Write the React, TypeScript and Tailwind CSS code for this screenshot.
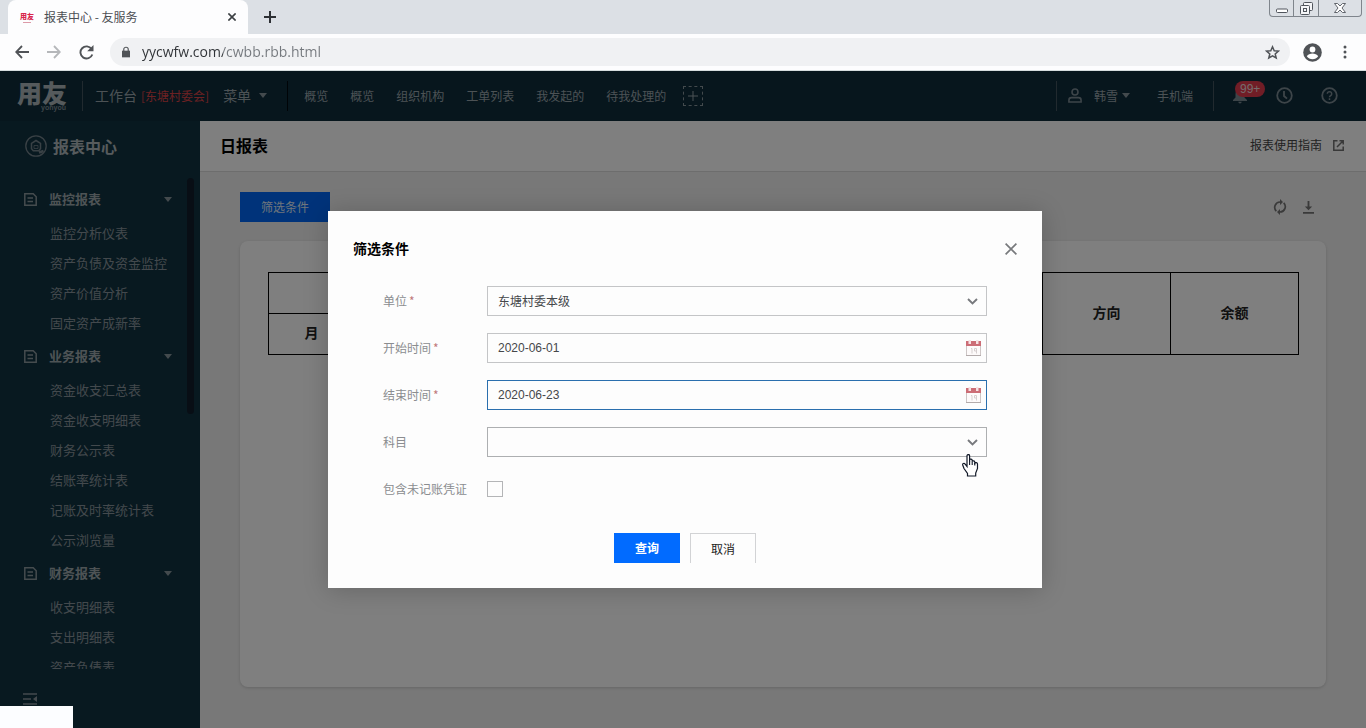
import { useState } from "react";
import type { ReactNode } from "react";

const menuGroups = [
  {
    title: "监控报表",
    items: ["监控分析仪表", "资产负债及资金监控", "资产价值分析", "固定资产成新率"],
  },
  {
    title: "业务报表",
    items: ["资金收支汇总表", "资金收支明细表", "财务公示表", "结账率统计表", "记账及时率统计表", "公示浏览量"],
  },
  {
    title: "财务报表",
    items: ["收支明细表", "支出明细表", "资产负债表"],
  },
];

const shortcuts = ["概览", "概览", "组织机构", "工单列表", "我发起的", "待我处理的"];

function Caret() {
  return (
    <svg width="8" height="5" viewBox="0 0 8 5" className="shrink-0 text-[#87949b]" fill="currentColor" aria-hidden="true">
      <path d="M0 0h8L4 5z" />
    </svg>
  );
}

function DocIcon() {
  return (
    <svg width="13" height="13" viewBox="0 0 13 13" fill="none" stroke="#8b989d" strokeWidth="1.500" aria-hidden="true">
      <path d="M.8.8h8.400l3 3v8.400H.8z" />
      <path d="M3.500 5h5.500M3.500 8.500h5.500" />
    </svg>
  );
}

function CalendarIcon() {
  return (
    <svg width="15" height="16" viewBox="0 0 15 16" aria-hidden="true">
      <path d="M.5 5.500h14v10H.5z" fill="#fdfafa" stroke="#cdc6c6" />
      <path d="M0 1h15v5H0z" fill="#cc6d76" />
      <path d="M2.500 0h2.500v4H2.500zM10 0h2.500v4H10z" fill="#f6e2e3" />
      <path d="M5 8.500h1v5M8.500 8.500h2v5M8.500 8.500v2.500h2" fill="none" stroke="#d6cfcf" />
      <path d="M0 15.500h15" stroke="#b3abab" />
    </svg>
  );
}

function BrowserBar() {
  return (
    <div className="shrink-0 bg-[#dce0e5] font-['Open_Sans','Noto_Sans_CJK_SC',sans-serif]">
      <div className="flex h-[34px] items-start justify-between">
        <div className="flex h-full items-center pl-2">
          <div className="flex h-full w-[240px] items-center rounded-t-lg bg-[#fdfdfe] pr-2 pl-3 text-[12px] text-[#4c4f54]">
            <span className="flex w-[14px] flex-col items-center text-[7px] leading-[9px] font-black text-[#d8274c]" aria-hidden="true">
              <span className="whitespace-nowrap">用友</span>
              <span className="mt-px h-px w-2 bg-[#dc9aa8]" />
            </span>
            <span className="ml-[10px] flex-1 font-['Noto_Sans_CJK_SC',sans-serif]">报表中心 - 友服务</span>
            <button type="button" aria-label="关闭标签页" className="flex size-4 items-center justify-center text-[#3c4043]">
              <svg width="8" height="8" viewBox="0 0 8 8" stroke="currentColor" strokeWidth="1.600" aria-hidden="true">
                <path d="M.4.4l7.200 7.200M7.600.4L.4 7.600" />
              </svg>
            </button>
          </div>
          <button type="button" aria-label="新标签页" className="ml-4 text-[#2d3034]">
            <svg width="12" height="12" viewBox="0 0 12 12" stroke="currentColor" strokeWidth="2" aria-hidden="true">
              <path d="M6 0v12M0 6h12" />
            </svg>
          </button>
        </div>
        <div className="mr-1 flex h-[17px] rounded-b border border-t-0 border-[#7f858c] text-[#50555c]">
          <button type="button" aria-label="最小化" className="flex w-6 items-center justify-center border-r border-[#7f858c]">
            <svg width="12" height="12" viewBox="0 0 12 12" fill="#fff" stroke="currentColor" aria-hidden="true">
              <rect x=".5" y="7" width="11" height="3.500" rx="1" />
            </svg>
          </button>
          <button type="button" aria-label="还原" className="flex w-[25px] items-center justify-center border-r border-[#7f858c]">
            <svg width="13" height="13" viewBox="0 0 13 13" fill="#f4f5f7" stroke="currentColor" aria-hidden="true">
              <rect x="3.500" y=".5" width="9" height="8" rx="1" />
              <rect x=".5" y="3.500" width="9" height="9" rx="1" />
              <rect x="3.500" y="6.500" width="3" height="3" />
            </svg>
          </button>
          <button type="button" aria-label="关闭" className="flex w-[42px] items-center justify-center">
            <svg width="12" height="10" viewBox="0 0 12 10" fill="#fff" stroke="currentColor" strokeWidth=".9" aria-hidden="true">
              <path d="M.5.5h3L6 3 8.500.5h3L8 5l3.500 4.500h-3L6 7 3.500 9.500h-3L4 5z" />
            </svg>
          </button>
        </div>
      </div>
      <div className="flex h-[37px] items-center border-b border-[#d5dcdd] bg-[#fdfdfe] pr-[19px] pl-[15px] text-[#505357]">
        <button type="button" aria-label="后退">
          <svg width="14" height="14" viewBox="0 0 14 14" fill="none" stroke="currentColor" strokeWidth="1.800" aria-hidden="true">
            <path d="M14 7H1.500M7 1L1.200 7 7 13" />
          </svg>
        </button>
        <button type="button" aria-label="前进" className="ml-[18px] text-[#b5b7ba]">
          <svg width="14" height="14" viewBox="0 0 14 14" fill="none" stroke="currentColor" strokeWidth="1.800" aria-hidden="true">
            <path d="M0 7h12.500M7 1l5.800 6L7 13" />
          </svg>
        </button>
        <button type="button" aria-label="重新加载" className="ml-[18px]">
          <svg width="15" height="15" viewBox="0 0 15 15" fill="none" stroke="currentColor" strokeWidth="1.900" aria-hidden="true">
            <path d="M12.600 4A6.100 6.100 0 1 0 13.300 9.500" />
            <path d="M14.500 0v6.300H8.200z" fill="currentColor" stroke="none" />
          </svg>
        </button>
        <div className="ml-4 flex h-7 flex-1 items-center rounded-full bg-[#f0f1f3] pr-[10px] pl-3">
          <svg width="8" height="12" viewBox="0 0 9 12" fill="none" stroke="currentColor" className="shrink-0" aria-hidden="true">
            <path d="M0 4.500h9V12H0z" fill="currentColor" stroke="none" />
            <path d="M2 5V3a2.500 2.300 0 0 1 5 0v2" strokeWidth="1.300" />
          </svg>
          <input
            aria-label="地址"
            defaultValue="yycwfw.com/cwbb.rbb.html"
            className="ml-3 flex-1 bg-transparent bg-[linear-gradient(90deg,#2f3236_81px,#74787d_81px)] bg-clip-text pb-[2px] text-[14px] text-transparent outline-none"
          />
          <button type="button" aria-label="添加书签">
            <svg width="15" height="15" viewBox="0 0 15 15" fill="none" stroke="currentColor" strokeWidth="1.500" aria-hidden="true">
              <path d="M7.500 1.800l1.700 3.900 4.200.4-3.200 2.800 1 4.100-3.700-2.200L3.800 13l1-4.100L1.600 6.100l4.200-.4z" />
            </svg>
          </button>
        </div>
        <button type="button" aria-label="账户" className="ml-[13px]">
          <svg width="19" height="19" viewBox="0 0 19 19" aria-hidden="true">
            <circle cx="9.500" cy="9.500" r="9.300" fill="currentColor" />
            <circle cx="9.500" cy="6.500" r="2.900" fill="#fff" />
            <path d="M3.800 13.300c1.200-1.900 3.400-2.700 5.700-2.700s4.500.8 5.700 2.700a6.900 6.900 0 0 1-11.400 0z" fill="#fff" />
          </svg>
        </button>
        <button type="button" aria-label="更多" className="ml-[21px]">
          <svg width="4" height="14" viewBox="0 0 4 14" fill="currentColor" aria-hidden="true">
            <circle cx="2" cy="2" r="1.500" />
            <circle cx="2" cy="7" r="1.500" />
            <circle cx="2" cy="12" r="1.500" />
          </svg>
        </button>
      </div>
    </div>
  );
}

function TopBar() {
  return (
    <header className="flex h-[50px] shrink-0 items-center justify-between bg-[#0f2c3b] pb-px text-[12px] text-[#98a4aa]">
      <div className="flex items-center">
        <a href="#home" aria-label="用友" className="ml-[17px] flex w-[50px] flex-col items-end text-[#aab4b9]">
          <span className="text-[25px] leading-[25px] font-black">用友</span>
          <span className="pr-px font-['Liberation_Sans',sans-serif] text-[7px] leading-[6px] font-bold text-[#7c8b93]">yonyou</span>
        </a>
        <span className="ml-[15px] h-[30px] w-px bg-[#43545e]" />
        <a href="#workbench" className="ml-3 text-[14px]">工作台</a>
        <span className="ml-1 text-[#d94346]">[东塘村委会]</span>
        <button type="button" className="ml-[14px] flex items-center gap-2 text-[14px]">
          菜单
          <Caret />
        </button>
        <span className="ml-5 h-[30px] w-px bg-[#00080e]" />
        <nav className="ml-4 flex gap-[22px]">
          {shortcuts.map((name, i) => (
            <a key={i} href="#shortcut" className="whitespace-nowrap">{name}</a>
          ))}
        </nav>
        <button type="button" aria-label="添加快捷入口" className="ml-[17px] flex size-5 items-center justify-center border border-dashed border-[#87949b]">
          <svg width="10" height="10" viewBox="0 0 10 10" stroke="currentColor" aria-hidden="true">
            <path d="M5 0v10M0 5h10" />
          </svg>
        </button>
      </div>
      <div className="flex items-center pr-7">
        <span className="h-[30px] w-px bg-[#43545e]" />
        <button type="button" className="ml-[11px] flex items-center">
          <svg width="14" height="15" viewBox="0 0 15 16" fill="none" stroke="#7b8a92" strokeWidth="1.700" aria-hidden="true">
            <circle cx="7.500" cy="4.200" r="3.200" />
            <path d="M1 15v-2c0-1.700 1.200-2.700 2.700-2.700h7.600c1.500 0 2.700 1 2.700 2.700v2z" />
          </svg>
          <span className="mr-1 ml-3">韩雪</span>
          <Caret />
        </button>
        <a href="#mobile" className="ml-[27px]">手机端</a>
        <span className="ml-5 h-[30px] w-px bg-[#43545e]" />
        <button type="button" aria-label="通知" className="relative ml-[18px] text-[#7b8a92]">
          <svg width="16" height="16" viewBox="0 0 16 16" fill="currentColor" aria-hidden="true">
            <path d="M8 1C5 1 3.500 3 3.500 6v3.500L1 12v1h14v-1l-2.500-2.500V6C12.500 3 11 1 8 1zM6.300 13.800h3.400a1.700 1.700 0 0 1-3.400 0z" />
          </svg>
          <span className="absolute -top-[7px] left-[3px] rounded-full bg-[#e23a4c] px-[5px] font-['Liberation_Sans',sans-serif] text-[12px] leading-4 text-[#ecd6d8]">99+</span>
        </button>
        <button type="button" aria-label="历史" className="ml-7 text-[#7b8a92]">
          <svg width="17" height="17" viewBox="0 0 17 17" fill="none" stroke="currentColor" strokeWidth="1.800" aria-hidden="true">
            <circle cx="8.500" cy="8.500" r="7.300" />
            <path d="M8 4v5l3 2.700" />
          </svg>
        </button>
        <button type="button" aria-label="帮助" className="ml-7 text-[#7b8a92]">
          <svg width="17" height="17" viewBox="0 0 17 17" fill="none" stroke="currentColor" strokeWidth="1.800" aria-hidden="true">
            <circle cx="8.500" cy="8.500" r="7.300" />
            <path d="M6.300 6.800a2.200 2.200 0 1 1 3.400 1.900c-.8.500-1.200.8-1.200 1.500M8.500 11.300v1.600" strokeWidth="1.500" />
          </svg>
        </button>
      </div>
    </header>
  );
}

function SideBar() {
  return (
    <aside className="relative flex w-[200px] shrink-0 flex-col bg-[#113240] text-[13px] text-[#87939a]">
      <div className="flex h-[50px] shrink-0 items-center gap-[6px] pb-px pl-[25px] text-[16px] font-bold text-[#adb6ba]">
        <svg width="22" height="22" viewBox="0 0 22 22" fill="none" stroke="#73828a" aria-hidden="true">
          <circle cx="11" cy="11" r="10.200" strokeWidth="1.300" />
          <path d="M11 5.500l4.500 2.800v5.500l-1.800 2H8.300l-1.800-2V8.300z" strokeWidth="1.500" />
          <path d="M9 10.500h4v3H9z" strokeWidth=".8" />
          <path d="M14 17.500l4.500-1.500" strokeWidth="2.500" />
        </svg>
        报表中心
      </div>
      <nav className="mt-[10px] min-h-0 flex-1 overflow-hidden">
        {menuGroups.map((group) => (
          <section key={group.title}>
            <button type="button" className="flex h-[37px] w-full items-center pr-7 pb-px pl-6 font-bold text-[#9ca7ab]">
              <DocIcon />
              <span className="ml-3 flex-1 text-left">{group.title}</span>
              <Caret />
            </button>
            <ul>
              {group.items.map((item) => (
                <li key={item}>
                  <a href="#report" className="block h-[30px] pl-[50px] leading-[30px] whitespace-nowrap">{item}</a>
                </li>
              ))}
            </ul>
          </section>
        ))}
      </nav>
      <div className="h-[59px] shrink-0 pt-6 pl-[23px]">
        <button type="button" aria-label="收起菜单" className="block">
          <svg width="14" height="12" viewBox="0 0 14 12" aria-hidden="true">
            <path d="M0 1h14M0 6h8M0 11h14" stroke="#87939a" strokeWidth="1.500" />
            <path d="M14 3v6l-4-3z" fill="#87939a" />
          </svg>
        </button>
      </div>
      <span className="absolute top-[57px] right-[6px] h-[236px] w-[7px] rounded-full bg-[#101c2a]" />
    </aside>
  );
}

function ReportTable() {
  return (
    <table className="w-full table-fixed border-collapse text-[14px] text-[#222]">
      <colgroup>
        <col className="w-[86px]" />
        <col className="w-[86px]" />
        <col className="w-[128px]" />
        <col />
        <col className="w-[128px]" />
        <col className="w-[128px]" />
        <col className="w-[128px]" />
        <col className="w-[128px]" />
      </colgroup>
      <thead>
        <tr className="h-[41px]">
          <th colSpan={2} className="border border-black" />
          <th rowSpan={2} className="border border-black" />
          <th rowSpan={2} className="border border-black" />
          <th rowSpan={2} className="border border-black" />
          <th rowSpan={2} className="border border-black" />
          <th rowSpan={2} className="border border-black pb-[3px]">方向</th>
          <th rowSpan={2} className="border border-black pb-[3px]">余额</th>
        </tr>
        <tr className="h-[41px]">
          <th className="border border-black pb-[3px]">月</th>
          <th className="border border-black" />
        </tr>
      </thead>
    </table>
  );
}

function Field({ id, label, required, children }: { id: string; label: string; required?: boolean; children: ReactNode }) {
  return (
    <>
      <label htmlFor={id} className="self-center whitespace-nowrap text-[#8b8d90]">
        {label}
        {required && <span className="ml-[2px] text-[#c0787b]">*</span>}
      </label>
      <div className="relative flex h-[30px] items-center">{children}</div>
    </>
  );
}

function HandCursor() {
  return (
    <svg width="17" height="23" viewBox="0 0 17 23" className="pointer-events-none absolute top-[27px] right-2" aria-hidden="true">
      <path
        d="M5 1.800c0-1.700 2.600-1.700 2.600 0v5.700V5.800c.4-1 2.500-.8 2.600.5v1.200c.4-1 2.500-.7 2.600.6v1c.6-.9 2.700-.6 2.700 1v4.400l-1.800 4.500V22H5.500v-2.500L2 14.500.7 11c-.4-1.500 1.500-2.200 2.500-.8L5 12.500z"
        fill="#fff"
        stroke="#111827"
        strokeWidth="1.200"
      />
      <path d="M7.600 7v4M10.200 7.500V11M12.800 9v2.500" stroke="#111827" strokeWidth="1.100" />
    </svg>
  );
}

function SelectChevron() {
  return (
    <svg width="11" height="7" viewBox="0 0 11 7" fill="none" stroke="#77797d" strokeWidth="1.900" className="pointer-events-none absolute right-[9px]" aria-hidden="true">
      <path d="M1 1l4.500 4.500L10 1" />
    </svg>
  );
}

function FilterDialog({ onClose }: { onClose: () => void }) {
  return (
    <div
      role="dialog"
      aria-labelledby="filter-title"
      className="w-[714px] max-w-full bg-[#fdfdfd] px-[25px] pt-6 pb-[25px] text-[12px] shadow-[0_2px_24px_rgba(0,0,0,0.2)]"
    >
      <div className="flex h-7 items-center justify-between">
        <h2 id="filter-title" className="pb-[2px] text-[14px] font-bold text-black">筛选条件</h2>
        <button type="button" aria-label="关闭" onClick={onClose} className="flex h-7 w-3 items-center text-[#77797c]">
          <svg width="12" height="12" viewBox="0 0 12 12" stroke="currentColor" strokeWidth="1.700" aria-hidden="true">
            <path d="M.6.6l10.800 10.800M11.400.6L.6 11.400" />
          </svg>
        </button>
      </div>
      <form onSubmit={(e) => e.preventDefault()}>
        <div className="mt-[23px] grid grid-cols-[104px_1fr] gap-y-[17px] px-[30px] text-[#45474a]">
          <Field id="unit" label="单位" required>
            <select id="unit" className="h-full w-full appearance-none border border-[#c4c5c7] bg-transparent px-[10px] outline-none">
              <option>东塘村委本级</option>
            </select>
            <SelectChevron />
          </Field>
          <Field id="start" label="开始时间" required>
            <input id="start" defaultValue="2020-06-01" className="h-full w-full border border-[#c4c5c7] px-[10px] font-['Liberation_Sans',sans-serif] outline-none" />
            <span className="absolute right-[6px]"><CalendarIcon /></span>
          </Field>
          <Field id="end" label="结束时间" required>
            <input id="end" defaultValue="2020-06-23" className="h-full w-full border border-[#2a6fae] px-[10px] font-['Liberation_Sans',sans-serif] outline-none" />
            <span className="absolute right-[6px]"><CalendarIcon /></span>
          </Field>
          <Field id="subject" label="科目">
            <select id="subject" className="h-full w-full appearance-none border border-[#adafb1] bg-transparent px-[10px] outline-none">
              <option />
            </select>
            <SelectChevron />
            <HandCursor />
          </Field>
          <Field id="unposted" label="包含未记账凭证">
            <input id="unposted" type="checkbox" className="size-4 appearance-none border border-[#b4b5b7] checked:bg-[#016bff]" />
          </Field>
        </div>
        <div className="mt-[29px] flex h-[30px] justify-center gap-[10px]">
          <button type="submit" className="w-[66px] bg-[#016bff] font-bold text-white">查询</button>
          <button type="button" onClick={onClose} className="w-[66px] border border-b-0 border-[#d2d3d5] text-[#222]">取消</button>
        </div>
      </form>
    </div>
  );
}

export default function App() {
  const [open, setOpen] = useState(true);
  return (
    <div className="relative flex h-screen flex-col overflow-hidden font-['Noto_Sans_CJK_SC',sans-serif]">
      <BrowserBar />
      <div className="relative flex min-h-0 flex-1 flex-col">
        <TopBar />
        <div className="flex min-h-0 flex-1">
          <SideBar />
          <main className="flex min-w-0 flex-1 flex-col bg-[#f0f0f0]">
            <div className="flex h-[51px] shrink-0 items-center justify-between border-b border-[#dadada] bg-white pr-[22px] pb-[2px] pl-5">
              <h1 className="text-[16px] font-bold text-black">日报表</h1>
              <a href="#guide" className="flex items-center gap-[11px] text-[12px] text-[#444]">
                报表使用指南
                <svg width="11" height="11" viewBox="0 0 11 11" fill="none" stroke="#707070" strokeWidth="1.500" aria-hidden="true">
                  <path d="M4.500.8H.8v9.400h9.400V6.500M6.500.8h3.700v3.700M10.200.8L4 7" />
                </svg>
              </a>
            </div>
            <div className="flex min-h-0 flex-1 flex-col px-10 pt-5 pb-[41px]">
              <div className="flex h-[30px] shrink-0 items-center justify-between pr-3 text-[#747474]">
                <button type="button" onClick={() => setOpen(true)} className="h-full w-[90px] bg-[#0067f5] text-[12px] text-[#dfe9f7]">筛选条件</button>
                <div className="flex items-center gap-4">
                  <button type="button" aria-label="刷新">
                    <svg width="14" height="16" viewBox="0 0 14 16" fill="none" stroke="currentColor" strokeWidth="1.700" aria-hidden="true">
                      <path d="M3.300 12.200A5.400 5.400 0 0 1 7 3h.7M10.700 3.800A5.400 5.400 0 0 1 7 13h-.7" />
                      <path d="M7 0l3 3-3 3zM7 10v6l-3-3z" fill="currentColor" stroke="none" />
                    </svg>
                  </button>
                  <button type="button" aria-label="下载">
                    <svg width="11" height="13" viewBox="0 0 12 14" fill="currentColor" aria-hidden="true">
                      <path d="M5 0h2v6h3l-4 4-4-4h3zM0 12h12v1.700H0z" />
                    </svg>
                  </button>
                </div>
              </div>
              <div className="mt-[19px] min-h-0 flex-1 rounded-lg bg-white pt-[31px] pr-[27px] pl-7 shadow-[0_1px_3px_rgba(0,0,0,0.15)]">
                <ReportTable />
              </div>
            </div>
          </main>
        </div>
        {open && (
          <div className="absolute inset-0 flex items-start justify-center bg-black/50 pt-[140px] pl-1">
            <FilterDialog onClose={() => setOpen(false)} />
          </div>
        )}
      </div>
      <div className="absolute bottom-0 left-0 h-[22px] w-[73px] bg-[#fcfdff]" />
    </div>
  );
}
